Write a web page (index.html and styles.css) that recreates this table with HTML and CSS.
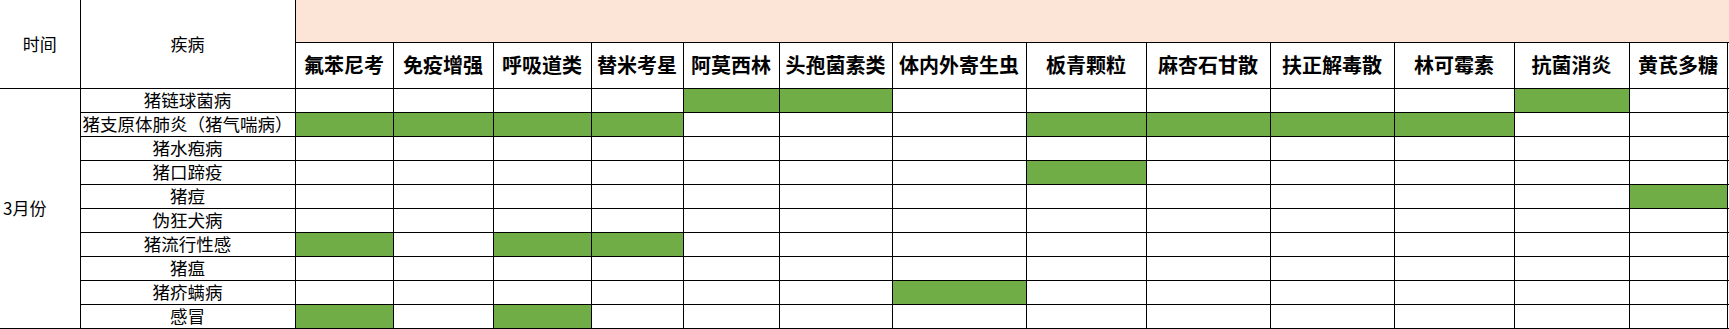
FILE: index.html
```html
<!DOCTYPE html>
<html lang="zh-CN">
<head>
<meta charset="utf-8">
<title>3月份 疾病用药表</title>
<link rel="stylesheet" href="styles.css">
</head>
<body>
<table class="sheet">
  <colgroup>
    <col class="w-time"><col class="w-dis">
    <col class="w98"><col class="w100"><col class="w98"><col class="w92"><col class="w96"><col class="w113"><col class="w134"><col class="w120"><col class="w124"><col class="w124"><col class="w120"><col class="w115"><col class="w98"><col class="w-cut">
  </colgroup>
  <tr class="r-band">
    <td class="hd-side nl" rowspan="2">时间</td>
    <td class="hd-side" rowspan="2">疾病</td>
    <td class="band" colspan="14"></td>
  </tr>
  <tr class="r-head">
    <th>氟苯尼考</th><th>免疫增强</th><th>呼吸道类</th><th>替米考星</th><th>阿莫西林</th><th>头孢菌素类</th><th>体内外寄生虫</th><th>板青颗粒</th><th>麻杏石甘散</th><th>扶正解毒散</th><th>林可霉素</th><th>抗菌消炎</th><th>黄芪多糖</th><th class="cut"><span class="cut-mark"></span></th>
  </tr>
  <tr>
    <td class="month nl" rowspan="10">3月份</td>
    <td class="dis">猪链球菌病</td>
    <td></td><td></td><td></td><td></td><td class="on"></td><td class="on"></td><td></td><td></td><td></td><td></td><td></td><td class="on"></td><td></td><td class="cut"></td>
  </tr>
  <tr>
    <td class="dis">猪支原体肺炎（猪气喘病）</td>
    <td class="on"></td><td class="on"></td><td class="on"></td><td class="on"></td><td></td><td></td><td></td><td class="on"></td><td class="on"></td><td class="on"></td><td class="on"></td><td></td><td></td><td class="cut"></td>
  </tr>
  <tr>
    <td class="dis">猪水疱病</td>
    <td></td><td></td><td></td><td></td><td></td><td></td><td></td><td></td><td></td><td></td><td></td><td></td><td></td><td class="cut"></td>
  </tr>
  <tr>
    <td class="dis">猪口蹄疫</td>
    <td></td><td></td><td></td><td></td><td></td><td></td><td></td><td class="on"></td><td></td><td></td><td></td><td></td><td></td><td class="cut"></td>
  </tr>
  <tr>
    <td class="dis">猪痘</td>
    <td></td><td></td><td></td><td></td><td></td><td></td><td></td><td></td><td></td><td></td><td></td><td></td><td class="on"></td><td class="cut"></td>
  </tr>
  <tr>
    <td class="dis">伪狂犬病</td>
    <td></td><td></td><td></td><td></td><td></td><td></td><td></td><td></td><td></td><td></td><td></td><td></td><td></td><td class="cut"></td>
  </tr>
  <tr>
    <td class="dis">猪流行性感</td>
    <td class="on"></td><td></td><td class="on"></td><td class="on"></td><td></td><td></td><td></td><td></td><td></td><td></td><td></td><td></td><td></td><td class="cut"></td>
  </tr>
  <tr>
    <td class="dis">猪瘟</td>
    <td></td><td></td><td></td><td></td><td></td><td></td><td></td><td></td><td></td><td></td><td></td><td></td><td></td><td class="cut"></td>
  </tr>
  <tr>
    <td class="dis">猪疥螨病</td>
    <td></td><td></td><td></td><td></td><td></td><td></td><td class="on"></td><td></td><td></td><td></td><td></td><td></td><td></td><td class="cut"></td>
  </tr>
  <tr>
    <td class="dis">感冒</td>
    <td class="on"></td><td></td><td class="on"></td><td></td><td></td><td></td><td></td><td></td><td></td><td></td><td></td><td></td><td></td><td class="cut"></td>
  </tr>
</table>
</body>
</html>
```
FILE: styles.css
```css
html, body {
  margin: 0;
  padding: 0;
  background: #ffffff;
  overflow: hidden;
}

.sheet {
  border-collapse: collapse;
  table-layout: fixed;
  width: 1729px;
  font-family: "Noto Sans CJK SC", "Noto Sans", sans-serif;
  color: #000000;
}

.w-time { width: 80px; }
.w-dis { width: 215px; }
.w92 { width: 92px; }
.w96 { width: 96px; }
.w98 { width: 98px; }
.w100 { width: 100px; }
.w113 { width: 113px; }
.w115 { width: 115px; }
.w120 { width: 120px; }
.w124 { width: 124px; }
.w134 { width: 134px; }
.w-cut { width: 2px; }

.sheet td,
.sheet th {
  border: 1px solid #000000;
  padding: 0;
  text-align: center;
  vertical-align: middle;
  white-space: nowrap;
  overflow: hidden;
}

.sheet .nl {
  border-left: none;
}

.sheet .r-band td {
  border-top: none;
}

.sheet tr {
  height: 24px;
}

.sheet .r-band { height: 42px; }
.sheet .r-head { height: 46px; }

.sheet .band {
  background: #fce4d6;
  border-right: none;
}

.sheet .cut {
  border-right: none;
}

.cut-mark {
  display: block;
  width: 2px;
  height: 7px;
  margin-left: 1px;
  background: #f4b183;
}

.hd-side {
  font-size: 17px;
  font-weight: 400;
  line-height: 20px;
}

.r-head th {
  font-size: 20px;
  font-weight: 700;
  line-height: 24px;
  overflow: visible;
}

.dis {
  font-size: 17.5px;
  line-height: 22px;
  overflow: visible;
}

.sheet td.month {
  font-size: 17px;
  text-align: left;
  padding-left: 3px;
  line-height: 22px;
}

.sheet .on {
  background: #70ad47;
}
```
